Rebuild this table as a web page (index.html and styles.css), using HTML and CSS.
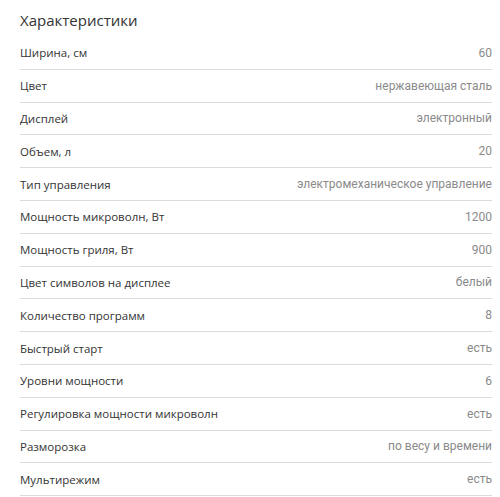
FILE: index.html
```html
<!DOCTYPE html>
<html lang="ru">
<head>
<meta charset="utf-8">
<link rel="stylesheet" href="styles.css">
</head>
<body>
<section class="specs">
  <h2 class="specs-title">Характеристики</h2>
  <ul class="specs-list">
    <li class="spec"><span class="spec-name">Ширина, см</span><span class="spec-value">60</span></li>
    <li class="spec"><span class="spec-name">Цвет</span><span class="spec-value">нержавеющая сталь</span></li>
    <li class="spec"><span class="spec-name">Дисплей</span><span class="spec-value">электронный</span></li>
    <li class="spec"><span class="spec-name">Объем, л</span><span class="spec-value">20</span></li>
    <li class="spec"><span class="spec-name">Тип управления</span><span class="spec-value">электромеханическое управление</span></li>
    <li class="spec"><span class="spec-name">Мощность микроволн, Вт</span><span class="spec-value">1200</span></li>
    <li class="spec"><span class="spec-name">Мощность гриля, Вт</span><span class="spec-value">900</span></li>
    <li class="spec"><span class="spec-name">Цвет символов на дисплее</span><span class="spec-value">белый</span></li>
    <li class="spec"><span class="spec-name">Количество программ</span><span class="spec-value">8</span></li>
    <li class="spec"><span class="spec-name">Быстрый старт</span><span class="spec-value">есть</span></li>
    <li class="spec"><span class="spec-name">Уровни мощности</span><span class="spec-value">6</span></li>
    <li class="spec"><span class="spec-name">Регулировка мощности микроволн</span><span class="spec-value">есть</span></li>
    <li class="spec"><span class="spec-name">Разморозка</span><span class="spec-value">по весу и времени</span></li>
    <li class="spec"><span class="spec-name">Мультирежим</span><span class="spec-value">есть</span></li>
  </ul>
</section>
</body>
</html>
```

FILE: styles.css
```css
html, body {
  margin: 0;
  padding: 0;
  background: #fff;
}

.specs {
  padding: 10px 8px 0 20px;
  font-family: "Open Sans", "Noto Sans", sans-serif;
}

.specs-title {
  margin: 0 0 7px;
  font-size: 15px;
  line-height: 20px;
  font-weight: 400;
  color: #333;
}

.specs-list {
  list-style: none;
  margin: 0;
  padding: 0;
}

.spec {
  display: flex;
  justify-content: space-between;
  align-items: center;
  height: 31.8px;
  border-bottom: 1px solid #dcdcdc;
}

.spec-name {
  font-size: 11.5px;
  color: #333;
}

.spec-value {
  font-family: Roboto, "Liberation Sans", sans-serif;
  font-size: 12px;
  color: #8a8a8a;
}
```
